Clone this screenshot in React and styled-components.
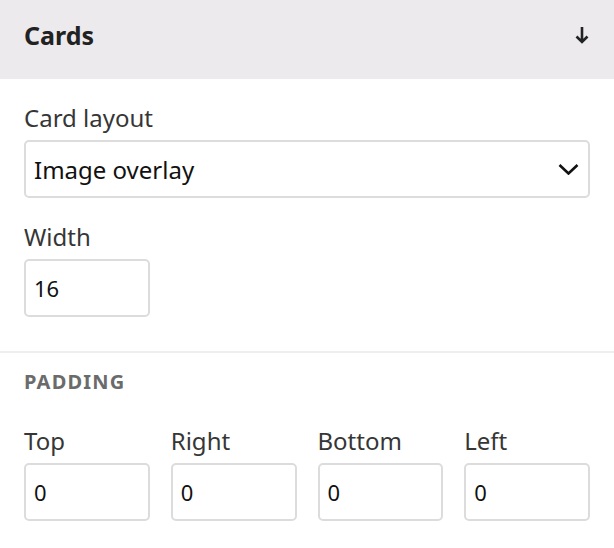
import React from "react";
import styled, { createGlobalStyle } from "styled-components";

const Global = createGlobalStyle`
  html, body { margin: 0; padding: 0; background: #fff; }
  body { font-family: "Noto Sans", "Open Sans", sans-serif; color: #2b2b2b; }
  * { box-sizing: border-box; }
`;

const Panel = styled.div`
  width: 614px;
  height: 548px;
  background: #fff;
  overflow: hidden;
`;

const Header = styled.div`
  height: 79px;
  background: #eceaed;
  display: flex;
  align-items: center;
  justify-content: space-between;
  padding: 0 25px 9px 24px;
`;

const Title = styled.h2`
  margin: 0;
  font-size: 25px;
  font-weight: 700;
  color: #222;
`;

const Section = styled.div`
  padding: ${(p) => p.$pad || "24px"};
  display: flex;
  flex-direction: column;
  gap: ${(p) => p.$gap || "0"};
  border-top: ${(p) => (p.$divided ? "2px solid #eeeeee" : "none")};
`;

const Field = styled.div`
  display: flex;
  flex-direction: column;
  gap: 7px;
`;

const Label = styled.label`
  font-size: 24px;
  line-height: 30px;
  color: #363636;
`;

const Box = styled.div`
  height: 58px;
  border: 2px solid #dcdcdc;
  border-radius: 5px;
  display: flex;
  align-items: center;
  padding: 0 9px 0 8px;
  font-size: ${(p) => p.$fs || "22px"};
  color: #111;
  width: ${(p) => p.$w || "100%"};
  justify-content: space-between;
`;

const Heading = styled.div`
  font-size: 20px;
  line-height: 24px;
  font-weight: 700;
  letter-spacing: 1.2px;
  color: #6b6b6b;
`;

const Grid = styled.div`
  display: grid;
  grid-template-columns: repeat(4, 1fr);
  gap: 21px;
`;

const Chevron = () => (
  <svg width="21" height="12" viewBox="0 0 21 12" fill="none">
    <path d="M1.5 2l9 8.5 9-8.5" stroke="#111" strokeWidth="2.6" />
  </svg>
);

const DownArrow = () => (
  <svg width="14" height="18" viewBox="0 0 14 18" fill="none">
    <path d="M7 1v15M1.5 10.5L7 16l5.5-5.5" stroke="#222" strokeWidth="2.6" />
  </svg>
);

export default function App() {
  return (
    <Panel>
      <Global />
      <Header>
        <Title>Cards</Title>
        <DownArrow />
      </Header>
      <Section $gap="24px" $pad="24px 24px 34px">
        <Field>
          <Label>Card layout</Label>
          <Box $fs="24px">
            <span>Image overlay</span>
            <Chevron />
          </Box>
        </Field>
        <Field>
          <Label>Width</Label>
          <Box $w="126px">16</Box>
        </Field>
      </Section>
      <Section $divided $gap="32px" $pad="17px 24px 24px">
        <Heading>PADDING</Heading>
        <Grid>
          {["Top", "Right", "Bottom", "Left"].map((s) => (
            <Field key={s}>
              <Label>{s}</Label>
              <Box>0</Box>
            </Field>
          ))}
        </Grid>
      </Section>
    </Panel>
  );
}
